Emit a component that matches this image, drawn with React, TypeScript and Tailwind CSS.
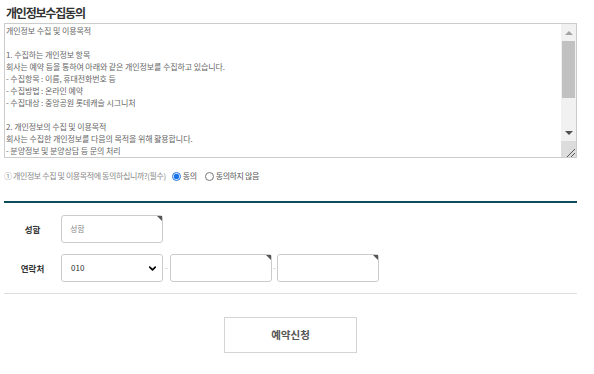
import { ChevronDown } from "lucide-react"

const terms = `개인정보 수집 및 이용목적

1. 수집하는 개인정보 항목
회사는 예약 등을 통하여 아래와 같은 개인정보를 수집하고 있습니다.
- 수집항목 : 이름, 휴대전화번호 등
- 수집방법 : 온라인 예약
- 수집대상 : 중앙공원 롯데캐슬 시그니처

2. 개인정보의 수집 및 이용목적
회사는 수집한 개인정보를 다음의 목적을 위해 활용합니다.
- 분양정보 및 분양상담 등 문의 처리
- 신규 분양정보 안내`

// small dark triangle in the top-right corner of required inputs
function Corner() {
  return (
    <span className="absolute right-0 top-0 h-0 w-0 border-l-[5px] border-t-[5px] border-l-transparent border-t-[#555]" />
  )
}

function Box({ children }: { children?: React.ReactNode }) {
  return (
    <div className="relative flex h-[28px] w-[102px] items-center rounded-[3px] border border-[#ccc] bg-white px-[8px] text-[8px] text-[#888]">
      {children}
    </div>
  )
}

// classic scrollbar with arrows + resize grip
function Scrollbar() {
  return (
    <div className="flex w-[15px] flex-col bg-[#f1f1f1]">
      <div className="flex h-[17px] items-center justify-center">
        <span className="h-0 w-0 border-x-[4px] border-b-[4px] border-x-transparent border-b-[#a3a3a3]" />
      </div>
      <div className="mx-[1px] h-[57px] bg-[#c1c1c1]" />
      <div className="flex-1" />
      <div className="flex h-[17px] items-center justify-center">
        <span className="h-0 w-0 border-x-[4px] border-t-[4px] border-x-transparent border-t-[#505050]" />
      </div>
      <div className="h-[16px] bg-[#dcdcdc]">
        <svg width="15" height="16" viewBox="0 0 15 16">
          <path d="M14 8 L6 16 M14 12 L10 16" stroke="#555" strokeWidth="1" />
        </svg>
      </div>
    </div>
  )
}

export default function App() {
  return (
    <div className="h-[374px] w-[594px] bg-white pl-[4px] pr-[17px] font-['Noto_Sans_CJK_KR',sans-serif]">
      <h2 className="pl-[2px] pt-[3px] text-[12px] font-bold leading-[20px] tracking-[-1.2px] text-[#333]">
        개인정보수집동의
      </h2>

      <div className="flex h-[135px] border border-[#ccc]">
        <textarea
          readOnly
          defaultValue={terms}
          className="block flex-1 resize-none overflow-hidden px-[1px] pt-[1px] text-[8px] leading-[12px] tracking-[-0.1px] text-[#666] outline-none"
        />
        <Scrollbar />
      </div>

      <div className="mt-[12px] flex h-[12px] items-center gap-[4px] text-[8px] tracking-[-0.4px] text-[#888]">
        <span>① 개인정보 수집 및 이용목적에 동의하십니까?(필수)</span>
        <label className="ml-[2px] flex items-center gap-[2px] text-[#555]">
          <input type="radio" name="agree" defaultChecked className="m-0 h-[9px] w-[9px] accent-[#1a73e8]" />
          동의
        </label>
        <label className="ml-[4px] flex items-center gap-[2px] text-[#555]">
          <input type="radio" name="agree" className="m-0 h-[9px] w-[9px]" />
          동의하지 않음
        </label>
      </div>

      <div className="mt-[19px] border-t-2 border-[#0d4d5a]" />

      <div className="flex flex-col gap-[11px] pt-[12px] pb-[11px]">
        <div className="flex items-center">
          <span className="w-[57px] text-center text-[8.5px] font-bold text-[#333]">성함</span>
          <Box>
            성함
            <Corner />
          </Box>
        </div>
        <div className="flex items-center">
          <span className="w-[57px] text-center text-[8.5px] font-bold text-[#333]">연락처</span>
          <div className="relative flex h-[28px] w-[102px] items-center justify-between rounded-[3px] border border-[#ccc] bg-white pl-[9px] pr-[4px] text-[8px] text-[#333]">
            010
            <ChevronDown className="h-[11px] w-[11px] text-black" strokeWidth={3.5} />
          </div>
          <span className="w-[7px] text-center text-[8px] text-[#bbb]">-</span>
          <Box>
            <Corner />
          </Box>
          <span className="w-[5px] text-center text-[8px] text-[#bbb]">-</span>
          <Box>
            <Corner />
          </Box>
        </div>
      </div>

      <div className="border-t border-[#ddd]" />

      <div className="flex justify-center pt-[23px]">
        <button className="h-[36px] w-[133px] border border-[#d4d4d4] bg-white text-[10.5px] font-bold text-[#555]">
          예약신청
        </button>
      </div>
    </div>
  )
}
